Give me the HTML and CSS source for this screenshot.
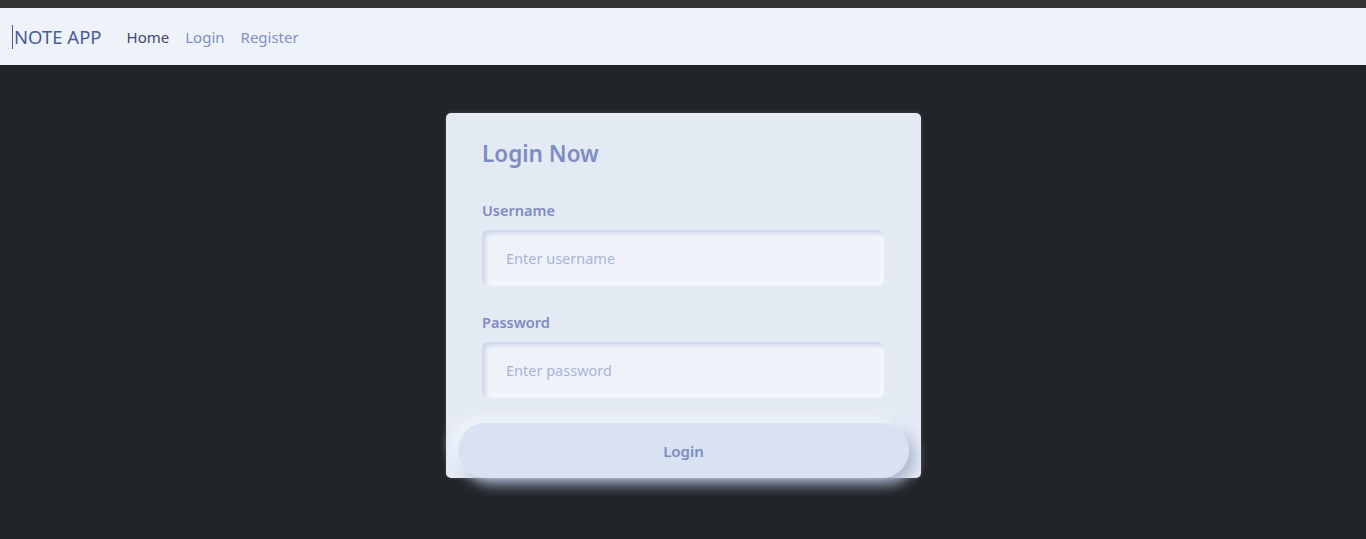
FILE: index.html
```html
<!DOCTYPE html>
<html>
<head>
<meta charset="utf-8">
<link rel="stylesheet" href="styles.css">
</head>
<body>
<div class="topstrip"></div>
<nav class="navbar">
  <span class="brand">NOTE APP</span>
  <a class="nav-link active" href="#">Home</a>
  <a class="nav-link" href="#">Login</a>
  <a class="nav-link" href="#">Register</a>
</nav>
<main class="main">
  <form class="card">
    <h1 class="title">Login Now</h1>
    <label class="label">Username</label>
    <input class="input" type="text" placeholder="Enter username">
    <label class="label">Password</label>
    <input class="input" type="password" placeholder="Enter password">
    <button class="btn" type="button">Login</button>
  </form>
</main>
</body>
</html>
```
FILE: styles.css
```css
* { box-sizing: border-box; }
html, body { margin: 0; padding: 0; }
body {
  background: #212429;
  font-family: "Noto Sans", "Open Sans", sans-serif;
  height: 539px;
  overflow: hidden;
}
.topstrip {
  height: 8px;
  background: #333333;
}
.navbar {
  height: 57px;
  background: #eef3f9;
  display: flex;
  align-items: center;
  padding-left: 12px;
}
.brand {
  font-size: 18.5px;
  color: #4b5a99;
  border-left: 1px solid #4b5a99;
  padding-left: 1px;
  line-height: 24px;
  margin-right: 25px;
}
.nav-link {
  font-size: 15px;
  color: #8090c4;
  text-decoration: none;
  margin-right: 16px;
}
.nav-link.active { color: #3e4670; }
.main {
  display: flex;
  justify-content: center;
  padding-top: 48px;
  padding-left: 1px;
}
.card {
  width: 475px;
  height: 365px;
  background: #e4eaf4;
  border-radius: 5px;
  padding: 26px 36px 0 36px;
  display: flex;
  flex-direction: column;
  box-shadow: 0 0 4px rgba(255,255,255,0.15);
}
.title {
  margin: 0;
  font-size: 22.5px;
  font-weight: 600;
  color: #7d8cc3;
  line-height: 30px;
}
.label {
  margin-top: 26px;
  font-size: 14.5px;
  font-weight: 600;
  color: #7d8cc3;
  line-height: 20px;
}
.title + .label { margin-top: 31px; }
.input {
  margin-top: 10px;
  width: 402px;
  height: 56px;
  border: none;
  border-radius: 6px;
  background: #eff3f9;
  padding: 0 24px;
  font-family: inherit;
  font-size: 14.5px;
  color: #4b5a99;
  box-shadow: inset 3px 3px 5px #c9d3e8, inset -3px -3px 5px #f6f9fd;
  outline: none;
}
.input::placeholder { color: #a8b4d8; }
.btn {
  margin-top: 25px;
  margin-left: -24px;
  width: 451px;
  height: 55px;
  border: none;
  border-radius: 28px;
  background: #d9e2f1;
  font-family: inherit;
  font-size: 15px;
  font-weight: 600;
  color: #7d8cc3;
  box-shadow: -6px -6px 12px #eef3fa, 6px 6px 14px #a9b4ce;
}
```
